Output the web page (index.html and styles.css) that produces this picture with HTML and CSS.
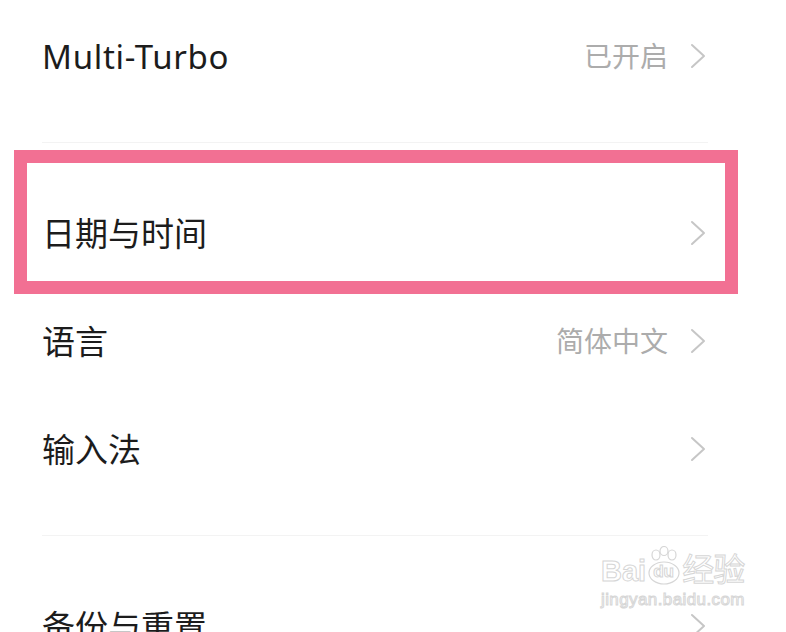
FILE: index.html
```html
<!DOCTYPE html>
<html lang="zh-CN">
<head>
  <meta charset="UTF-8" />
  <meta name="viewport" content="width=device-width, initial-scale=1.0" />
  <title>设置</title>
  <link rel="stylesheet" href="styles.css">
</head>
<body>
  <div class="lista">
    <section class="grupo">
      <div class="item">
        <span class="titulo latino">Multi-Turbo</span>
        <span class="valor">已开启</span>
        <svg class="seta" viewBox="0 0 16 26"><polyline points="2,2 14,13 2,24" /></svg>
      </div>
    </section>

    <section class="grupo">
      <div class="item destaque">
        <span class="titulo">日期与时间</span>
        <svg class="seta" viewBox="0 0 16 26"><polyline points="2,2 14,13 2,24" /></svg>
      </div>
      <div class="item">
        <span class="titulo">语言</span>
        <span class="valor">简体中文</span>
        <svg class="seta" viewBox="0 0 16 26"><polyline points="2,2 14,13 2,24" /></svg>
      </div>
      <div class="item">
        <span class="titulo">输入法</span>
        <svg class="seta" viewBox="0 0 16 26"><polyline points="2,2 14,13 2,24" /></svg>
      </div>
    </section>

    <section class="grupo">
      <div class="item">
        <span class="titulo">备份与重置</span>
        <svg class="seta" viewBox="0 0 16 26"><polyline points="2,2 14,13 2,24" /></svg>
      </div>
    </section>
  </div>

  <div class="marca">
    <div class="marca-topo">
      <span>Bai</span>
      <span class="pata">
        <svg viewBox="0 0 34 40">
          <ellipse cx="9" cy="9" rx="4" ry="5" />
          <ellipse cx="17" cy="5" rx="4" ry="4.5" />
          <ellipse cx="25" cy="9" rx="4" ry="5" />
          <ellipse cx="17" cy="27" rx="15" ry="11" />
        </svg>
        <span class="du">du</span>
      </span>
      <span class="jy">经验</span>
    </div>
    <div class="marca-url">jingyan.baidu.com</div>
  </div>
</body>
</html>
```

FILE: styles.css
```css
body {
  margin: 0;
  background: #fff;
  font-family: "Noto Sans", "Noto Sans CJK SC", sans-serif;
  color: #1c1c1c;
  height: 632px;
  overflow: hidden;
  position: relative;
}
.lista {
  padding: 2px 78px 0 42px;
}
.grupo + .grupo {
  margin-top: 32px;
  padding-top: 36px;
  border-top: 1px solid #f3f3f3;
}
.item {
  height: 108px;
  display: flex;
  align-items: center;
  position: relative;
}
.titulo {
  flex: 1;
  font-size: 33px;
  line-height: 1;
}
.latino {
  letter-spacing: 0.7px;
}
.valor {
  font-size: 28px;
  line-height: 1;
  color: #acacac;
  margin-right: 22px;
}
.seta {
  width: 16px;
  height: 26px;
  margin-right: 2px;
}
.seta polyline {
  fill: none;
  stroke: #c6c6c6;
  stroke-width: 2;
  stroke-linecap: round;
  stroke-linejoin: round;
}
.destaque::after {
  content: "";
  position: absolute;
  top: -29px;
  bottom: -7px;
  left: -28px;
  right: -30px;
  border: 13px solid #f27093;
}
.marca {
  position: absolute;
  left: 601px;
  top: 546px;
  width: 146px;
  color: #fff;
  -webkit-text-stroke: 1px #d6d6d6;
  font-family: "Liberation Sans", "Noto Sans CJK SC", sans-serif;
}
.marca-topo {
  display: flex;
  align-items: flex-end;
  font-size: 29px;
  line-height: 1;
  font-weight: bold;
}
.pata {
  position: relative;
  width: 34px;
  height: 40px;
  margin: 0 1px;
}
.pata svg {
  width: 34px;
  height: 40px;
}
.pata ellipse {
  fill: #fff;
  stroke: #d6d6d6;
  stroke-width: 1.2;
}
.du {
  position: absolute;
  left: 6px;
  bottom: 6px;
  font-size: 17px;
}
.jy {
  font-size: 32px;
  font-weight: normal;
  letter-spacing: -1px;
}
.marca-url {
  font-size: 17px;
  line-height: 1;
  margin-top: 5px;
  letter-spacing: 0.4px;
}
```
